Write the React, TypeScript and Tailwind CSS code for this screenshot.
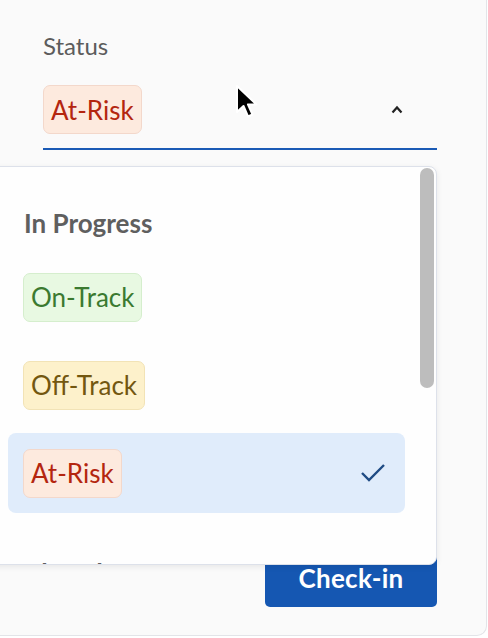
import React from 'react';

type Tone = 'green' | 'yellow' | 'red';

const chipTone: Record<Tone, string> = {
  green: 'bg-[#e8f9e2] border-[#d5eecd] text-[#3b7a30]',
  yellow: 'bg-[#fdf1cb] border-[#f2e3b6] text-[#735710]',
  red: 'bg-[#fdeade] border-[#f3d8cb] text-[#b4260f]',
};

const StatusChip = ({ label, tone }: { label: string; tone: Tone }) => (
  <span
    className={`inline-flex items-center h-[49px] px-[7px] rounded-[7px] border text-[26px] leading-none ${chipTone[tone]}`}
  >
    {label}
  </span>
);

const options: { label: string; tone: Tone; selected?: boolean }[] = [
  { label: 'On-Track', tone: 'green' },
  { label: 'Off-Track', tone: 'yellow' },
  { label: 'At-Risk', tone: 'red', selected: true },
];

const Cursor = () => (
  <svg
    className="absolute left-[235px] top-[84px]"
    width="24"
    height="36"
    viewBox="0 0 24 36"
  >
    <path
      d="M2 2 L2 28 L8.5 22 L13 32.5 L17.5 30.5 L13 20.5 L21.5 20.5 Z"
      fill="#000"
      stroke="#fff"
      strokeWidth="2"
      strokeLinejoin="round"
    />
  </svg>
);

export default function App() {
  return (
    <div className="relative w-[488px] h-[638px] overflow-hidden bg-white font-['Lato',sans-serif]">
      <div className="w-[487px] h-[636px] bg-[#fafafa] border-r border-b border-[#e3e4e8] rounded-br-[10px] pl-[43px] pr-[49px] pt-[31px]">
        <div className="text-[24px] leading-[30px] text-[#5c5c5c]">Status</div>

        <div className="mt-[24px] flex items-center justify-between border-b-2 border-[#1a5ab5] pb-[14px]">
          <StatusChip label="At-Risk" tone="red" />
          <svg className="mr-[34px]" width="12" height="9" viewBox="0 0 12 9">
            <path d="M1.5 7.5 L6 2.5 L10.5 7.5" fill="none" stroke="#222" strokeWidth="2.2" />
          </svg>
        </div>

        <div className="mt-[399px] flex justify-end">
          <button className="w-[172px] h-[58px] rounded-[5px] bg-[#1557b2] text-white text-[26px] font-bold tracking-[0.3px]">
            Check-in
          </button>
        </div>
      </div>

      {/* open listbox */}
      <div className="absolute left-[-10px] top-[166px] w-[447px] h-[399px] flex bg-[#fefefe] border border-[#dde1ea] rounded-[8px] shadow-[0_2px_6px_rgba(0,0,0,0.08)] overflow-hidden">
        <div className="flex-1 pl-[17px] pr-[15px]">
          <div className="pt-[22px]">
            <div className="h-[68px] flex items-center pl-[16px] text-[26px] font-bold text-[#5f5f5f]">
              In Progress
            </div>
            <div className="flex flex-col gap-[8px]">
              {options.map((o) => (
                <div
                  key={o.label}
                  className={`h-[80px] flex items-center justify-between pl-[15px] pr-[19px] rounded-[8px] ${
                    o.selected ? 'bg-[#e0ecfb]' : ''
                  }`}
                >
                  <StatusChip label={o.label} tone={o.tone} />
                  {o.selected && (
                    <svg width="26" height="20" viewBox="0 0 26 20">
                      <path
                        d="M2 10 L9 17 L24 2"
                        fill="none"
                        stroke="#1f4b84"
                        strokeWidth="2.4"
                      />
                    </svg>
                  )}
                </div>
              ))}
            </div>
          </div>
          <div className="pt-[26px]">
            <div className="h-[68px] flex items-center pl-[16px] text-[26px] font-bold text-[#5f5f5f]">
              Closed
            </div>
          </div>
        </div>
        <div className="w-[16px] pt-[1px] pr-[1px]">
          <div className="w-[14px] h-[220px] rounded-full bg-[#bdbdbd]" />
        </div>
      </div>

      <Cursor />
    </div>
  );
}
